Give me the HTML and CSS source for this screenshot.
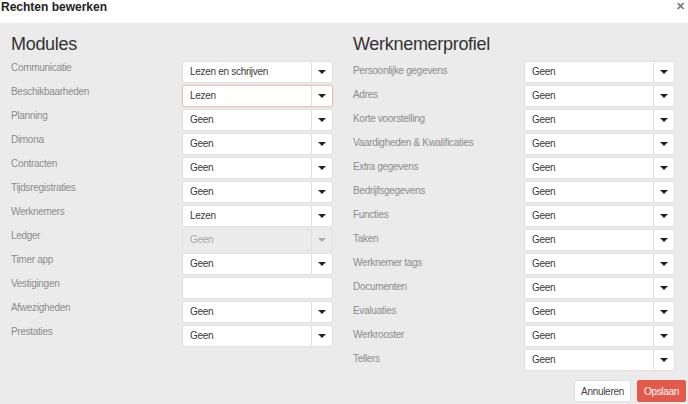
FILE: index.html
```html
<!DOCTYPE html>
<html lang="nl">
<head>
<meta charset="utf-8">
<title>Rechten bewerken</title>
<link rel="stylesheet" href="styles.css">
</head>
<body>
<div class="modal">
  <header class="modal-header">
    <h1 class="modal-title">Rechten bewerken</h1>
    <span class="close">&#x2715;</span>
  </header>
  <main class="modal-body">
    <div class="columns">
      <section class="col col-left">
        <h2 class="col-title">Modules</h2>
        <div class="rows">
          <div class="row"><span class="label">Communicatie</span><div class="select"><span class="value">Lezen en schrijven</span><span class="caret"></span></div></div>
          <div class="row"><span class="label">Beschikbaarheden</span><div class="select invalid"><span class="value">Lezen</span><span class="caret"></span></div></div>
          <div class="row"><span class="label">Planning</span><div class="select"><span class="value">Geen</span><span class="caret"></span></div></div>
          <div class="row"><span class="label">Dimona</span><div class="select"><span class="value">Geen</span><span class="caret"></span></div></div>
          <div class="row"><span class="label">Contracten</span><div class="select"><span class="value">Geen</span><span class="caret"></span></div></div>
          <div class="row"><span class="label">Tijdsregistraties</span><div class="select"><span class="value">Geen</span><span class="caret"></span></div></div>
          <div class="row"><span class="label">Werknemers</span><div class="select"><span class="value">Lezen</span><span class="caret"></span></div></div>
          <div class="row"><span class="label">Ledger</span><div class="select disabled"><span class="value">Geen</span><span class="caret"></span></div></div>
          <div class="row"><span class="label">Timer app</span><div class="select"><span class="value">Geen</span><span class="caret"></span></div></div>
          <div class="row"><span class="label">Vestigingen</span><div class="select empty"></div></div>
          <div class="row"><span class="label">Afwezigheden</span><div class="select"><span class="value">Geen</span><span class="caret"></span></div></div>
          <div class="row"><span class="label">Prestaties</span><div class="select"><span class="value">Geen</span><span class="caret"></span></div></div>
        </div>
      </section>
      <section class="col col-right">
        <h2 class="col-title">Werknemerprofiel</h2>
        <div class="rows">
          <div class="row"><span class="label">Persoonlijke gegevens</span><div class="select"><span class="value">Geen</span><span class="caret"></span></div></div>
          <div class="row"><span class="label">Adres</span><div class="select"><span class="value">Geen</span><span class="caret"></span></div></div>
          <div class="row"><span class="label">Korte voorstelling</span><div class="select"><span class="value">Geen</span><span class="caret"></span></div></div>
          <div class="row"><span class="label">Vaardigheden &amp; Kwalificaties</span><div class="select"><span class="value">Geen</span><span class="caret"></span></div></div>
          <div class="row"><span class="label">Extra gegevens</span><div class="select"><span class="value">Geen</span><span class="caret"></span></div></div>
          <div class="row"><span class="label">Bedrijfsgegevens</span><div class="select"><span class="value">Geen</span><span class="caret"></span></div></div>
          <div class="row"><span class="label">Functies</span><div class="select"><span class="value">Geen</span><span class="caret"></span></div></div>
          <div class="row"><span class="label">Taken</span><div class="select"><span class="value">Geen</span><span class="caret"></span></div></div>
          <div class="row"><span class="label">Werknemer tags</span><div class="select"><span class="value">Geen</span><span class="caret"></span></div></div>
          <div class="row"><span class="label">Documenten</span><div class="select"><span class="value">Geen</span><span class="caret"></span></div></div>
          <div class="row"><span class="label">Evaluaties</span><div class="select"><span class="value">Geen</span><span class="caret"></span></div></div>
          <div class="row"><span class="label">Werkrooster</span><div class="select"><span class="value">Geen</span><span class="caret"></span></div></div>
          <div class="row"><span class="label">Tellers</span><div class="select"><span class="value">Geen</span><span class="caret"></span></div></div>
        </div>
      </section>
    </div>
    <div class="footer">
      <button class="btn btn-default">Annuleren</button>
      <button class="btn btn-primary">Opslaan</button>
    </div>
  </main>
</div>
</body>
</html>
```

FILE: styles.css
```css
* { box-sizing: border-box; }
html, body { margin: 0; padding: 0; }
body {
  width: 688px;
  height: 404px;
  overflow: hidden;
  font-family: "Liberation Sans", Arial, sans-serif;
  background: #ebebeb;
  color: #333;
}
.modal { display: flex; flex-direction: column; height: 404px; }
.modal-header {
  height: 23px;
  background: #fff;
  display: flex;
  align-items: flex-start;
  justify-content: space-between;
  padding: 0 2px 0 1px;
}
.modal-title {
  margin: 0;
  font-size: 12px;
  line-height: 14px;
  font-weight: bold;
  color: #222;
}
.close {
  font-size: 11px;
  line-height: 12px;
  font-weight: bold;
  color: #7a7a7a;
  padding-right: 1px;
}
.modal-body {
  flex: 1;
  background: #ebebeb;
  padding: 10px 2px 0 11px;
  display: flex;
  flex-direction: column;
}
.columns { display: flex; gap: 20px; padding-right: 11px; }
.col { width: 322px; }
.col-title {
  margin: 0;
  font-size: 18px;
  line-height: 22px;
  font-weight: normal;
  letter-spacing: -0.3px;
  color: #333;
  height: 28px;
}
.rows { display: flex; flex-direction: column; gap: 2px; }
.row {
  display: flex;
  justify-content: space-between;
  height: 22px;
}
.label {
  font-size: 10px;
  line-height: 12px;
  letter-spacing: -0.3px;
  color: #8c8c8c;
}
.col-left .label { padding-top: 1px; }
.col-right .label { padding-top: 4px; }
.select {
  width: 151px;
  height: 22px;
  background: #fff;
  border: 1px solid #e0e0e0;
  border-radius: 2px;
  display: flex;
  align-items: stretch;
  font-size: 10px;
  letter-spacing: -0.3px;
}
.select .value {
  flex: 1;
  padding-left: 7px;
  line-height: 20px;
  color: #3a3a3a;
}
.select .caret {
  width: 21px;
  border-left: 1px solid #e0e0e0;
  position: relative;
}
.select .caret::after {
  content: "";
  position: absolute;
  left: 6px;
  top: 8px;
  border-left: 4px solid transparent;
  border-right: 4px solid transparent;
  border-top: 4px solid #222;
}
.select.invalid {
  border-color: #e8c3be;
  box-shadow: 0 0 2px rgba(220, 120, 110, 0.35);
}
.select.disabled { background: #ececec; border-color: #e2e2e2; }
.select.disabled .value { color: #a8a8a8; }
.select.disabled .caret::after { border-top-color: #aaa; }
.footer {
  display: flex;
  justify-content: flex-end;
  gap: 6px;
  margin-top: 9px;
}
.btn {
  height: 22px;
  font-family: "Liberation Sans", Arial, sans-serif;
  font-size: 10px;
  letter-spacing: -0.3px;
  border-radius: 2px;
  padding: 0;
  cursor: pointer;
}
.btn-default {
  width: 57px;
  background: #fff;
  border: 1px solid #e0e0e0;
  color: #444;
}
.btn-primary {
  width: 49px;
  background: #e35a4b;
  border: 1px solid #e35a4b;
  color: #fff;
}
```
